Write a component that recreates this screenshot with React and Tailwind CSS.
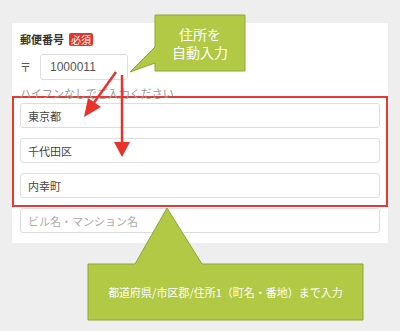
export default function App() {
  const field = 'h-[25px] border border-[#dddddd] rounded-[3px] bg-white flex items-center pl-[7px] text-[11px] leading-[14px]'

  return (
    <div className="relative w-[400px] h-[331px] overflow-hidden bg-[#eeeeee] pt-[23px] pl-[12px] font-['Noto_Sans_CJK_JP',sans-serif]">
      {/* Form card */}
      <div className="w-[376px] bg-white px-2 pt-[9px] pb-[10px]">
        <div className="flex items-center gap-[5px] h-[14px]">
          <span className="text-[11px] font-bold leading-[14px] text-[#333333]">郵便番号</span>
          <span className="bg-[#e3342f] text-white text-[10px] leading-[13px] px-[2px] rounded-[2px]">必須</span>
        </div>

        <div className="flex items-center mt-[8px]">
          <span className="w-5 text-[11px] leading-[14px] text-[#555555]">〒</span>
          <div className="w-[88px] h-[26px] border border-[#dddddd] rounded-[3px] flex items-center pl-[9px] text-[12px] text-[#555555] font-['Liberation_Sans',sans-serif]">
            1000011
          </div>
        </div>

        <p className="mt-[6px] text-[11px] leading-[14px] text-[#999999]">ハイフンなしでご入力ください</p>

        {/* Highlighted auto-filled group */}
        <div className="-mx-2 -mt-[4px] border-2 border-[#e53935] px-[6px] pt-[5px] pb-[7px] flex flex-col gap-[10px]">
          <div className={`${field} text-[#444444]`}>東京都</div>
          <div className={`${field} text-[#444444]`}>千代田区</div>
          <div className={`${field} text-[#444444]`}>内幸町</div>
        </div>

        <div className={`${field} mt-[1px] text-[#aaaaaa]`}>ビル名・マンション名</div>
      </div>

      {/* Annotations */}
      <svg className="absolute inset-0 pointer-events-none" width="400" height="331" viewBox="0 0 400 331">
        <polygon
          points="155,15 245,15 245,71 155,71 155,63 130,72 155,47"
          fill="#b1c944"
          stroke="#8fa637"
          strokeWidth="1"
        />
        <polygon
          points="88,264 135,264 167,208 202,264 363,264 363,320 88,320"
          fill="#b1c944"
          stroke="#8fa637"
          strokeWidth="1"
        />
        <line x1="116" y1="72" x2="93" y2="104" stroke="#e8322a" strokeWidth="2.5" />
        <polygon points="84,117 88,98 101,107" fill="#e8322a" />
        <line x1="122" y1="75" x2="122" y2="144" stroke="#e8322a" strokeWidth="2.5" />
        <polygon points="114,142 130,142 122,157" fill="#e8322a" />
      </svg>

      <div className="absolute left-[155px] top-[15px] w-[90px] h-[56px] flex items-center justify-center">
        <p className="text-center text-white text-[14px] leading-[18px]">
          住所を
          <br />
          自動入力
        </p>
      </div>

      <div className="absolute left-[88px] top-[264px] w-[275px] h-[56px] flex items-center justify-center text-white text-[11px] leading-[14px]">
        都道府県/市区郡/住所1（町名・番地）まで入力
      </div>
    </div>
  )
}
